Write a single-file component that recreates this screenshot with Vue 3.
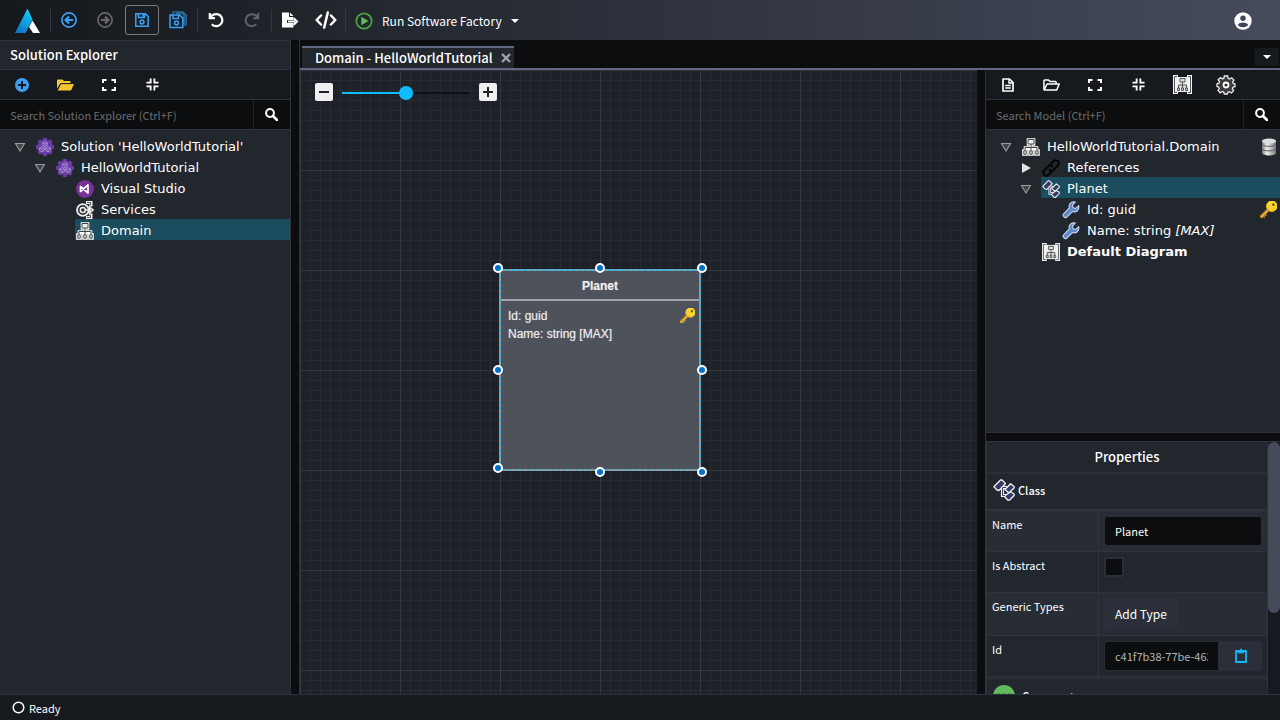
<script setup>
import { h, ref } from 'vue'

const gear = '<g fill="#6a3da6"><circle cx="9" cy="9" r="7.600"/><path id="teeth" d="M7 0h4v18H7zM0 7h18v4H0z"/><path d="M7 0h4v18H7zM0 7h18v4H0z" transform="rotate(45 9 9)"/></g><g fill="none" stroke="#a98dd6" stroke-width=".9"><path d="M9 3.500l2.300 1.200v2.600L9 8.500 6.700 7.300V4.700zM6 8.700l2.400 1.200v2.700L6 13.800l-2.400-1.200V9.900zM12 8.700l2.400 1.200v2.700L12 13.800l-2.400-1.200V9.900zM6.700 4.800L9 6l2.300-1.200M9 6v2.500M3.600 10L6 11.200l2.400-1.200M6 11.200v2.500M9.600 10l2.400 1.200 2.400-1.200M12 11.200v2.500"/></g>'
const treeShape = '<g fill="#fff" stroke="#fff" stroke-width="2.600"><path d="M6 1.500h6v5H6zM1.500 12.500h3v4h-3zM7.500 12.500h3v4h-3zM13.500 12.500h3v4h-3zM9 6v6M3 12V9.500h12V12"/></g><g fill="#eee" stroke="#444" stroke-width="1"><path d="M6 1.500h6v4.500H6z"/><path d="M9 6v6.500M3 12.500V9.500h12v3" fill="none"/><path d="M1.800 12.800h2.400v3.400H1.800zM7.800 12.800h2.400v3.400H7.800zM13.800 12.800h2.400v3.400h-2.400z"/></g>'
const keyShape = '<g transform="rotate(45 9 9)"><path d="M7.500 8h3v10.500L9 20l-1.500-1.500z" fill="#eab02c"/><path d="M10.500 13.500h1.500V15h-1.500zM10.500 16h1.500v1.500h-1.500z" fill="#d6952a"/><path d="M8 9v9.500" stroke="#b87a22" stroke-width="1"/><circle cx="9" cy="3.500" r="5.600" fill="#fad32f"/><path d="M4 5.500a5.400 5.400 0 0 0 10 0" fill="none" stroke="#dba024"/><circle cx="9" cy="1.300" r="1.300" fill="#54502c"/></g>'

const icons = {
  logo: ['0 0 26 26', '<defs><linearGradient id="lg" x1="0" y1="1" x2="0.400" y2="0"><stop offset="0" stop-color="#0a6fc4"/><stop offset="1" stop-color="#14c4f6"/></linearGradient></defs><path d="M12.500 .5L17.500 11.500 10.500 25H0z" fill="url(#lg)"/><path d="M17.500 12.500l7.500 12.500h-7l-4-6z" fill="#fff"/>'],
  back: ['0 0 16 16', '<g fill="none" stroke="#3ba0f3"><circle cx="8" cy="8" r="7.100" stroke-width="1.700"/><path d="M12.200 8H5M8 4.600L4.600 8 8 11.400" stroke-width="2.200"/></g>'],
  forward: ['0 0 16 16', '<g fill="none" stroke="#66686b"><circle cx="8" cy="8" r="7.100" stroke-width="1.700"/><path d="M3.800 8H11M8 4.600L11.400 8 8 11.400" stroke-width="2.200"/></g>'],
  save: ['0 0 14 14', '<g fill="none" stroke="#3ba0f3" stroke-width="1.500"><path d="M.8 .8h9.700l2.700 2.700v9.700H.8z"/><path d="M3.500 1v3.500h6V1M8 1.500v2"/><circle cx="7" cy="9" r="1.900"/></g>'],
  saveAll: ['0 0 18 18', '<g fill="none" stroke="#27689b" stroke-width="1.700"><path d="M4 3V1h10l3 3v10h-2M7 2.500h8V13"/></g><g fill="none" stroke="#3ba0f3" stroke-width="1.500"><path d="M1 4h9.500L13.800 7v9.500H1z"/><path d="M4 4v3.500h5.500V4"/><circle cx="7.500" cy="12" r="1.900"/></g>'],
  undo: ['0 0 16 16', '<path d="M1.800 1v5.200H7M2.300 5.800C3.500 3.500 5.600 2.200 8.300 2.200a6 6 0 1 1-4.500 10" fill="none" stroke="#fff" stroke-width="2.200"/>'],
  redo: ['0 0 16 16', '<path d="M14.200 1v5.200H9M13.700 5.800C12.500 3.500 10.400 2.200 7.700 2.200a6 6 0 1 0 4.500 10" fill="none" stroke="#616366" stroke-width="2"/>'],
  exportFile: ['0 0 18 16', '<path d="M1 .5h7V5h4.500v3H6v3h6.500v4.500H1z" fill="#fff"/><path d="M9 .5L12.500 4H9z" fill="#fff"/><path d="M7 9.500h7M12.800 6.300L16 9.500l-3.200 3.200" fill="none" stroke="#fff" stroke-width="2"/>'],
  code: ['0 0 22 18', '<path d="M6 4.500L1.700 9 6 13.500M16 4.500L20.300 9 16 13.500M12.800 1.500l-3.600 15" fill="none" stroke="#fff" stroke-width="2.500" stroke-linecap="round" stroke-linejoin="round"/>'],
  play: ['0 0 18 18', '<circle cx="9" cy="9" r="7.700" fill="none" stroke="#4ba944" stroke-width="1.700"/><path d="M6.300 4.700l7.200 4.300-7.200 4.300z" fill="#5fbb55"/>'],
  caret: ['0 0 8 4', '<path d="M0 0h8L4 4z" fill="#fff"/>'],
  user: ['0 0 18 18', '<circle cx="9" cy="9" r="8.700" fill="#fff"/><circle cx="9" cy="6.300" r="2.700" fill="#3f4553"/><path d="M3.800 13c1-2 3-2.600 5.200-2.600s4.200.6 5.200 2.600c-2.500 3-8 3-10.400 0z" fill="#3f4553"/>'],
  add: ['0 0 14 14', '<circle cx="7" cy="7" r="7" fill="#3ba0f3"/><path d="M7 3v8M3 7h8" stroke="#16191e" stroke-width="2"/>'],
  folder: ['0 0 17 12', '<path d="M0 9.500V1.500Q0 .5 1 .5h4.500L7 2h5.500q1 0 1 1V4.300H4.200L3 5z" fill="#f4c630"/><path d="M4 5h13l-3 6.500H.5z" fill="#f4c630"/><path d="M.6 10.500L3.600 4.700h10" fill="none" stroke="#16191e" stroke-width=".7"/>'],
  folderLine: ['0 0 17 12', '<path d="M.9 10.500V1.800L1.700 1H5.500L7 2.500h5.300l.9.900V5M4 5h12.200l-2.500 6H1.200z" fill="none" stroke="#fff" stroke-width="1.500" stroke-linejoin="round"/>'],
  expand: ['0 0 14 12', '<path d="M1 4V1h3.500M9.500 1H13v3M13 8v3H9.500M4.500 11H1V8" fill="none" stroke="#fff" stroke-width="2"/>'],
  collapse: ['0 0 14 14', '<path d="M5 .5V5H.5M9 .5V5h4.500M13.500 9H9v4.500M5 13.500V9H.5" fill="none" stroke="#fff" stroke-width="2"/>'],
  search: ['0 0 13 13', '<circle cx="5" cy="5" r="3.900" fill="none" stroke="#fff" stroke-width="2"/><path d="M8 8l4 4" stroke="#fff" stroke-width="2.600" stroke-linecap="round"/>'],
  file: ['0 0 12 14', '<path d="M1 1h6.500L11 4.500V13H1z" fill="none" stroke="#fff" stroke-width="1.700" stroke-linejoin="round"/><path d="M7 1v4h4M3.200 7.500h5.600M3.200 10h5.600" fill="none" stroke="#fff" stroke-width="1.400"/>'],
  diagram: ['0 0 19 19', '<path d="M0 0h5v19H0zM14 0h5v19h-5z" fill="#f4f4f4"/><path d="M4 1.500H1.500v16H4M15 1.500h2.500v16H15" fill="none" stroke="#555" stroke-width="1"/><path d="M4 2h11v15H4z" fill="#eee"/><path d="M7 3.500h5V7H7zM9.500 7v6M5.500 13v-3h8v3M4.500 13h2v2.500h-2zM8.500 13h2v2.500h-2zM12.500 13h2v2.500h-2z" fill="#ddd" stroke="#555" stroke-width="1"/>'],
  settings: ['0 0 20 20', '<path d="M8.300 1h3.400l.5 2.400 1.300.6 2.200-1.300 2.200 2.300-1.300 2.100.6 1.400L19 9v2.500l-2 .8-.6 1.400 1.200 2-2.200 2.300-2-1.300-1.500.6-.5 1.700H8.300l-.6-2-1.400-.5-2 1.300L2 15.500l1.300-2-.6-1.300L1 11.500V8.700l2-.6.500-1.400-1.300-2L4.500 2.500l2 1.400 1.300-.6z" fill="#3b3b3b" stroke="#ececec" stroke-width="1.300"/><circle cx="10" cy="10" r="2.500" fill="#333" stroke="#fff" stroke-width="1.800"/>'],
  close: ['0 0 10 10', '<path d="M1 1l8 8M9 1L1 9" stroke="#9ea0a5" stroke-width="2.400"/>'],
  open: ['0 0 12 10', '<path d="M1.500 1.500h9L6 9z" fill="#444" stroke="#9a9c9f" stroke-width="1.100"/>'],
  closed: ['0 0 12 10', '<path d="M2 0l9 5-9 5z" fill="#e2e2e2"/>'],
  gear: ['0 0 18 18', gear],
  vs: ['0 0 18 18', '<circle cx="9" cy="9" r="9" fill="#783195"/><path d="M4.500 6.500v5L12 5v8zM12 5v8" fill="none" stroke="#fff" stroke-width="1.700" stroke-linejoin="round"/>'],
  services: ['0 0 18 18', '<path d="M10 1.500h5v4M10 16.500h5v-4" fill="none" stroke="#eee" stroke-width="3"/><circle cx="6.800" cy="9" r="5.800" fill="#333" stroke="#eee" stroke-width="1.800"/><circle cx="6.800" cy="9" r="2.500" fill="#333" stroke="#eee" stroke-width="1.500"/><path d="M10 9h5M13.500 6l3.500 3-3.500 3z" fill="#333" stroke="#eee" stroke-width="1.500"/><path d="M11 1.500h3.500v2.500M11 16.500h3.500v-2.500" fill="none" stroke="#555"/>'],
  domain: ['0 0 18 18', treeShape],
  link: ['0 0 18 18', '<g fill="none" stroke="#050505" stroke-width="2" stroke-linecap="round"><path d="M8 6l3.500-3.700a3 3 0 0 1 4.300 4.300l-4 4a3 3 0 0 1-4.200 0"/><path d="M10 12l-3.500 3.700a3 3 0 0 1-4.300-4.300l4-4a3 3 0 0 1 4.200 0"/></g>'],
  classShape: ['0 0 22 22', '<path d="M9.500 8v8.500H14M10 8.500h4" fill="none" stroke="#f2f2f5" stroke-width="3.200"/><g fill="#343c66" stroke="#f2f2f5" stroke-width="1.300" stroke-linejoin="round"><path d="M7.500 1h1.500l3.500 3.500-6.500 7L4 11 .9 7.800zM17.500 4.800l3.600 2.700v1.500l-4.600 4.300h-1.500L12 10.500zM17.500 12.800l3.600 2.200v1.500l-4.600 4.700h-1.500L12 18.200v-1.400z"/></g><path d="M9.500 8.500v8H12M10 8.500h3" fill="none" stroke="#343c66" stroke-width="1"/>'],
  wrench: ['0 0 16 16', '<path d="M14.800 4.200l-2.600 2.300-2.400-.5-.5-2.300L11.700 1C9.500.2 6.500 1.300 6.300 4.500c0 .8 0 1.200.2 1.700L1.400 11.500c-1.200 1.300.8 4.200 2.700 2.900l5.200-5c3.200 1.200 6.500-1.500 5.500-5.200z" fill="#6188c6" stroke="#c3d3ee" stroke-width="1"/>'],
  key: ['0 0 18 18', keyShape],
  database: ['0 0 16 18', '<defs><linearGradient id="db"><stop offset="0" stop-color="#777"/><stop offset=".35" stop-color="#f2f2f2"/><stop offset="1" stop-color="#777"/></linearGradient></defs><path d="M1 3v12c0 3.300 14 3.300 14 0V3z" fill="url(#db)"/><ellipse cx="8" cy="3" rx="7" ry="2.500" fill="#ddd"/><path d="M1 6.500c2 2.500 12 2.500 14 0M1 11c2 2.500 12 2.500 14 0" fill="none" stroke="#5c5c5c" stroke-width="1"/>'],
  clipboard: ['0 0 12 15', '<path d="M1 3h10v11H1z" fill="none" stroke="#13b9fa" stroke-width="1.800" stroke-linejoin="round"/><path d="M3 2h1.800q1.200-3 2.400 0H9v3.200H3z" fill="#13b9fa"/>'],
  comment: ['0 0 22 22', '<circle cx="11" cy="11" r="11" fill="#62bb5c"/><g fill="#1f3d22"><circle cx="6" cy="10" r="1.600"/><circle cx="11" cy="10" r="1.600"/><circle cx="16" cy="10" r="1.600"/></g>'],
  ready: ['0 0 13 13', '<circle cx="6.500" cy="6.500" r="5.300" fill="none" stroke="#fff" stroke-width="1.500"/>'],
  minus: ['0 0 18 18', '<rect width="18" height="18" rx="2" fill="#efefef"/><path d="M4 9h10" stroke="#1e2026" stroke-width="2"/>'],
  plus: ['0 0 18 18', '<rect width="18" height="18" rx="2" fill="#efefef"/><path d="M4 9h10M9 4v10" stroke="#1e2026" stroke-width="2"/>'],
}

const Icon = (p) => h('svg', {
  viewBox: icons[p.name][0], width: p.w, height: p.h || p.w,
  class: 'icon', 'aria-hidden': 'true', innerHTML: icons[p.name][1],
})
Icon.props = ['name', 'w', 'h']

const solution = [
  { text: "Solution 'HelloWorldTutorial'", icon: 'gear', level: 0, toggle: 'open' },
  { text: 'HelloWorldTutorial', icon: 'gear', level: 1, toggle: 'open' },
  { text: 'Visual Studio', icon: 'vs', level: 2 },
  { text: 'Services', icon: 'services', level: 2 },
  { text: 'Domain', icon: 'domain', level: 2, selected: true },
]
const model = [
  { text: 'HelloWorldTutorial.Domain', icon: 'domain', level: 0, toggle: 'open', badge: 'database' },
  { text: 'References', icon: 'link', level: 1, toggle: 'closed' },
  { text: 'Planet', icon: 'classShape', level: 1, toggle: 'open', selected: true },
  { text: 'Id: guid', icon: 'wrench', level: 2, badge: 'key' },
  { text: 'Name: string ', note: '[MAX]', icon: 'wrench', level: 2 },
  { text: 'Default Diagram', icon: 'diagram', level: 1, bold: true },
]
const solutionTools = [['add', 14, 14, 'Add'], ['folder', 17, 12, 'Open'], ['expand', 14, 12, 'Expand all'], ['collapse', 13, 13, 'Collapse all']]
const modelTools = [['file', 12, 14, 'New'], ['folderLine', 17, 12, 'Open'], ['expand', 14, 12, 'Expand all'], ['collapse', 13, 13, 'Collapse all'], ['diagram', 19, 19, 'Diagram'], ['settings', 20, 20, 'Settings']]
const handles = [[6, 6], [108, 6], [210, 6], [6, 108], [210, 108], [6, 206], [108, 210], [210, 210]]
const zoom = ref(50)
const name = ref('Planet')
const isAbstract = ref(false)
const id = ref('c41f7b38-77be-4631-9a2c-5d0e8f7a1b24')
</script>

<template>
  <div class="app">
    <header class="topbar">
      <span class="logo"><Icon name="logo" :w="26" /></span>
      <i class="sep"></i>
      <button class="tool" aria-label="Back"><Icon name="back" :w="16" /></button>
      <button class="tool" aria-label="Forward"><Icon name="forward" :w="16" /></button>
      <button class="tool framed" aria-label="Save"><Icon name="save" :w="14" /></button>
      <button class="tool" aria-label="Save all"><Icon name="saveAll" :w="18" /></button>
      <i class="sep"></i>
      <button class="tool" aria-label="Undo"><Icon name="undo" :w="16" /></button>
      <button class="tool" aria-label="Redo"><Icon name="redo" :w="16" /></button>
      <i class="sep"></i>
      <button class="tool" aria-label="Export"><Icon name="exportFile" :w="18" :h="16" /></button>
      <button class="tool" aria-label="Code"><Icon name="code" :w="22" :h="18" /></button>
      <i class="sep"></i>
      <button class="run"><Icon name="play" :w="18" /><span>Run Software Factory</span><Icon name="caret" :w="8" :h="4" /></button>
      <button class="user" aria-label="Account"><Icon name="user" :w="18" /></button>
    </header>

    <main class="body">
      <aside class="panel left">
        <h2 class="title">Solution Explorer</h2>
        <div class="tools">
          <button v-for="t in solutionTools" :key="t[0]" :aria-label="t[3]"><Icon :name="t[0]" :w="t[1]" :h="t[2]" /></button>
        </div>
        <div class="search">
          <input type="text" placeholder="Search Solution Explorer (Ctrl+F)" aria-label="Search Solution Explorer">
          <button aria-label="Search"><Icon name="search" :w="13" /></button>
        </div>
        <ul class="tree">
          <li v-for="n in solution" :key="n.text" :class="'level' + n.level">
            <span class="toggle"><Icon v-if="n.toggle" :name="n.toggle" :w="12" :h="10" /></span>
            <span class="node" :class="{ selected: n.selected }"><span class="pic"><Icon :name="n.icon" :w="18" /></span>{{ n.text }}</span>
          </li>
        </ul>
      </aside>

      <section class="work">
        <div class="tabs">
          <div class="tab"><span>Domain - HelloWorldTutorial</span><button aria-label="Close tab"><Icon name="close" :w="10" /></button></div>
          <button class="tablist" aria-label="Tab list"><Icon name="caret" :w="8" :h="4" /></button>
        </div>
        <div class="split">
          <div class="canvas">
            <div class="zoombar">
              <button aria-label="Zoom out"><Icon name="minus" :w="18" /></button>
              <input v-model="zoom" type="range" min="0" max="100" aria-label="Zoom">
              <button aria-label="Zoom in"><Icon name="plus" :w="18" /></button>
            </div>
            <div class="entity">
              <div class="entity-name">Planet</div>
              <div class="attrs">
                <div class="attr"><span>Id: guid</span><Icon name="key" :w="16" /></div>
                <div class="attr"><span>Name: string [MAX]</span></div>
              </div>
              <svg class="frame" viewBox="0 0 216 216" aria-hidden="true">
                <rect x="8" y="8" width="200" height="200" class="line" />
                <rect x="8" y="8" width="200" height="200" class="dash" />
                <circle v-for="(c, i) in handles" :key="i" :cx="c[0]" :cy="c[1]" r="4" class="handle" />
              </svg>
            </div>
          </div>

          <aside class="panel right">
            <div class="model">
              <div class="tools wide">
                <button v-for="t in modelTools" :key="t[0]" :aria-label="t[3]"><Icon :name="t[0]" :w="t[1]" :h="t[2]" /></button>
              </div>
              <div class="search">
                <input type="text" placeholder="Search Model (Ctrl+F)" aria-label="Search Model">
                <button aria-label="Search"><Icon name="search" :w="13" /></button>
              </div>
              <ul class="tree">
                <li v-for="n in model" :key="n.text" :class="'level' + n.level">
                  <span class="toggle"><Icon v-if="n.toggle" :name="n.toggle" :w="12" :h="10" /></span>
                  <span class="node" :class="{ selected: n.selected, bold: n.bold }">
                    <span class="pic"><Icon :name="n.icon" :w="18" /></span>{{ n.text }}<em v-if="n.note">{{ n.note }}</em>
                    <span v-if="n.badge" class="badge"><Icon :name="n.badge" :w="n.badge === 'key' ? 18 : 16" :h="18" /></span>
                  </span>
                </li>
              </ul>
            </div>
            <div class="props">
              <div class="sheet">
                <h2 class="props-title">Properties</h2>
                <h3 class="group"><Icon name="classShape" :w="22" />Class</h3>
                <div class="row alt">
                  <label for="p-name">Name</label>
                  <div><input id="p-name" v-model="name" type="text" class="field"></div>
                </div>
                <div class="row">
                  <label for="p-abs">Is Abstract</label>
                  <div><input id="p-abs" v-model="isAbstract" type="checkbox" class="check"></div>
                </div>
                <div class="row alt tall">
                  <span>Generic Types</span>
                  <div><button class="addtype">Add Type</button></div>
                </div>
                <div class="row">
                  <label for="p-id">Id</label>
                  <div class="idbox"><input id="p-id" :value="id" type="text" class="field muted" readonly><button aria-label="Copy id"><Icon name="clipboard" :w="12" :h="15" /></button></div>
                </div>
                <h3 class="group next"><Icon name="comment" :w="22" />Comment</h3>
              </div>
              <div class="scroll"><div class="thumb"></div></div>
            </div>
          </aside>
        </div>
      </section>
    </main>

    <footer class="status"><Icon name="ready" :w="13" /><span>Ready</span></footer>
  </div>
</template>

<style>
body { background: #0b0d0f; }
.icon { display: block; flex: none; }
</style>

<style scoped>
* { box-sizing: border-box; }
.app {
  height: 100vh; display: flex; flex-direction: column; overflow: hidden;
  background: #0b0d0f; color: #fff; font-size: 12px;
  font-family: "Noto Sans CJK JP", "Noto Sans CJK SC", sans-serif;
}
button, input { font: inherit; color: inherit; border: 0; padding: 0; margin: 0; background: none; min-width: 0; }
button { display: flex; align-items: center; justify-content: center; }
h2, h3, ul { margin: 0; padding: 0; list-style: none; }

.topbar { flex: none; height: 40px; display: flex; align-items: center; background: linear-gradient(90deg, #15181c, #454b5b); }
.logo { width: 49px; padding: 2px 0 0 15px; }
.sep { width: 1px; height: 23px; margin-left: 1px; background: #343841; }
.tool { width: 36px; height: 30px; }
.tool.framed { width: 34px; margin: 0 1px 0 2px; border: 1px solid #77797c; border-radius: 3px; }
.run { gap: 9px; margin-left: 9px; padding-top: 2px; font-size: 12px; line-height: 18px; }
.user { margin-left: auto; margin-right: 28px; padding-top: 2px; }

.body { flex: 1; min-height: 0; display: flex; }
.panel { background: #22262d; display: flex; flex-direction: column; flex: none; }
.left { width: 291px; border-right: 1px solid #2f333d; border-top: 1px solid #2f333d; margin-right: 8px; }
.title { height: 29px; line-height: 28px; padding-left: 10px; font-size: 13px; font-weight: 500; border-bottom: 1px solid #2f333d; }
.tools { height: 30px; padding-right: 116px; display: flex; background: #16191e; border-bottom: 1px solid #2f333d; }
.tools.wide { padding-right: 32px; }
.tools button { flex: 1; }
.search { height: 30px; display: flex; background: #0b0d0f; border-bottom: 1px solid #2f333d; }
.search input { flex: 1; padding: 0 10px; font-size: 11px; outline: none; }
.search input::placeholder { color: #6c6d70; opacity: 1; }
.search button { width: 37px; padding-right: 2px; border-left: 1px solid #1e2127; }

.tree { padding-top: 5px; font: 13px/19px "DejaVu Sans", Verdana, sans-serif; }
.tree li { display: flex; height: 21px; white-space: pre; }
.level1 { padding-left: 20px; }
.level2 { padding-left: 40px; }
.toggle { width: 35px; padding: 2px 0 0 14px; display: flex; align-items: center; flex: none; }
.node { flex: 1; display: flex; align-items: center; min-width: 0; padding-top: 2px; }
.node.selected { background: #1b4d5e; }
.node.bold { font-weight: bold; }
.pic { width: 26px; padding-left: 1px; flex: none; }
.badge { margin-left: auto; padding-right: 3px; }

.work { flex: 1; min-width: 0; display: flex; flex-direction: column; border-left: 1px solid #2f333d; }
.tabs { flex: none; height: 30px; display: flex; align-items: flex-end; justify-content: space-between; border-bottom: 2px solid #5f6880; }
.tab { height: 22px; margin-left: 2px; display: flex; align-items: center; background: #22262d; border-top: 2px solid #5f6880; font-size: 13px; font-weight: 500; line-height: 20px; padding-left: 13px; gap: 8px; }
.tab button { padding-right: 3px; }
.tablist { width: 24px; height: 18px; background: #16191e; margin: 0 1px 2px 0; }
.split { flex: 1; min-height: 0; display: flex; }

.canvas {
  flex: 1; min-width: 0; position: relative; overflow: hidden; background-color: #1e2128; margin-right: 8px;
  background-image:
    linear-gradient(90deg, #35373f 1px, transparent 1px), linear-gradient(#35373f 1px, transparent 1px),
    linear-gradient(90deg, #282b32 1px, transparent 1px), linear-gradient(#282b32 1px, transparent 1px);
  background-size: 100px 100px, 100px 100px, 10px 10px, 10px 10px;
}
.zoombar { display: flex; align-items: center; gap: 9px; padding: 12px 15px; }
.zoombar input { appearance: none; width: 128px; height: 18px; margin-top: 2px; }
.zoombar input::-webkit-slider-runnable-track { height: 2px; background: linear-gradient(90deg, #12bdfb 50%, #101114 50%); }
.zoombar input::-webkit-slider-thumb { appearance: none; width: 14px; height: 14px; margin-top: -6px; border-radius: 50%; background: #0dbdff; }

.entity { position: absolute; left: 200px; top: 200px; width: 200px; height: 200px; background: #4e525b; color: #ececec; font: 12px/18px "Liberation Sans", Arial, sans-serif; text-shadow: 0 0 1px #aaa; }
.entity-name { height: 31px; line-height: 32px; text-align: center; font-weight: bold; border-bottom: 2px solid #a3a3a7; }
.attrs { padding: 6px 5px 0 8px; }
.attr { display: flex; align-items: center; justify-content: space-between; height: 18px; }
.frame { position: absolute; left: -8px; top: -8px; width: 216px; height: 216px; overflow: visible; }
.line { fill: none; stroke: #9a9a9c; stroke-width: 2; }
.dash { fill: none; stroke: #35b4dc; stroke-width: 2; stroke-dasharray: 3 3; }
.handle { fill: #0072c6; stroke: #fff; stroke-width: 2; }

.right { width: 295px; background: #0b0d0f; border-left: 1px solid #2f333d; }
.model { flex: 363; min-height: 0; background: #22262d; border-bottom: 1px solid #2f333d; overflow: hidden; }
.props { flex: 253; min-height: 0; margin-top: 8px; display: flex; background: #22262d; border-top: 1px solid #2f333d; overflow: hidden; }
.sheet { flex: 1; min-width: 0; overflow: hidden; border-right: 1px solid #2f333d; border-left: 1px solid #2f333d; }
.props-title { height: 32px; line-height: 30px; text-align: center; font-size: 13px; font-weight: 500; border-bottom: 2px solid #2a2e37; }
.group { height: 37px; display: flex; align-items: center; gap: 3px; padding: 0 0 3px 6px; font-size: 11px; font-weight: 500; border-bottom: 2px solid #2f333d; }
.group.next { margin-top: 1px; padding-bottom: 0; gap: 7px; border-top: 1px solid #2f333d; }
.row { height: 41px; display: flex; border-bottom: 1px solid #2f333d; font-size: 11px; }
.row.tall { height: 43px; }
.row.alt { background: #282c35; }
.row > :first-child { width: 112px; padding: 4px 5px; line-height: 18px; border-right: 1px solid #2f333d; }
.row > :last-child { flex: 1; min-width: 0; padding: 5px; }
.field { width: 100%; height: 30px; padding: 0 10px; background: #0b0d0f; border: 1px solid #2a2e37; border-radius: 3px; }
.muted { color: #b3b4b6; border-radius: 3px 0 0 3px; }
.check { appearance: none; display: block; width: 20px; height: 20px; background: #0b0d0f; border: 2px solid #2a2e37; }
.addtype { height: 32px; padding: 0 11px; background: #2b2f39; border-radius: 3px; font-size: 12px; line-height: 18px; }
.idbox { display: flex; }
.idbox button { width: 43px; flex: none; height: 30px; background: #2b2f39; border-radius: 0 3px 3px 0; }
.scroll { width: 12px; background: #16191e; }
.thumb { height: 68%; background: #454b5b; border-radius: 6px; }

.status { flex: none; height: 26px; display: flex; align-items: center; gap: 4px; padding-left: 12px; background: #16191e; border-top: 1px solid #2f333d; font-size: 11px; line-height: 18px; }
</style>
